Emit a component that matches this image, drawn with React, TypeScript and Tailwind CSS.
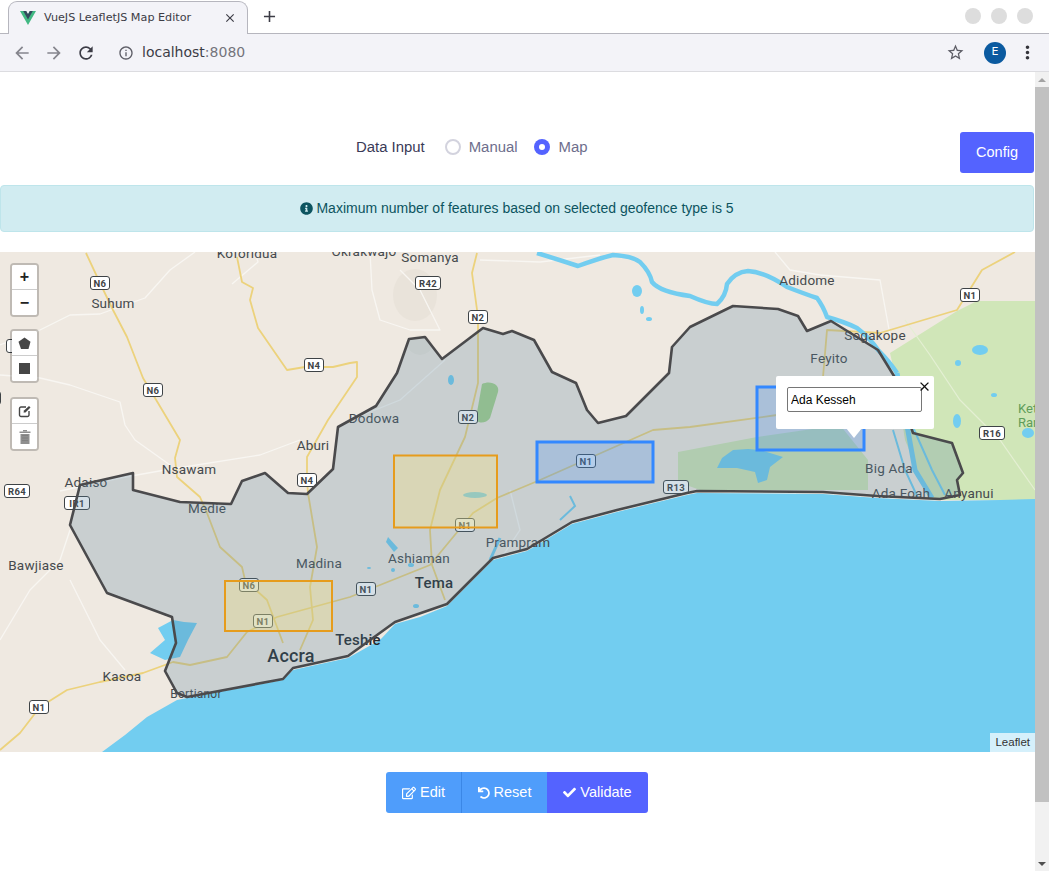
import React from 'react';
import { MdArrowBack, MdArrowForward, MdRefresh, MdInfoOutline, MdStarBorder, MdMoreVert, MdClose, MdAdd } from 'react-icons/md';
import { FaInfoCircle, FaRegEdit, FaUndo, FaCheck } from 'react-icons/fa';

// every map coordinate below is in page pixels, the svg viewBox starts at y=252
const boundary =
  '133,473 80,485 70,525 107,593 172,617 176,643 165,671 177,693 187,697 283,679 293,668 348,656 395,622 447,604 493,558 527,549 572,522 617,510 687,493 697,491 823,492 877,496 940,499 960,495 957,480 963,473 952,443 913,433 894,376 878,350 831,321 807,331 798,316 778,309 733,306 690,327 672,347 669,373 626,416 598,423 587,410 576,383 552,372 534,340 512,331 503,334 483,328 442,359 425,337 409,339 397,373 376,406 338,427 333,469 307,494 288,493 265,473 242,481 231,504 180,502 133,490';

const sea =
  '102,752 125,735 147,717 177,700 187,698 283,680 293,670 348,658 380,640 395,624 420,617 447,606 493,560 527,551 572,524 617,512 687,495 697,493 823,494 877,498 940,501 1000,500 1035,499 1035,752';

const yellowRoads = [
  '86,253 100,283 113,310 127,337 143,378 155,398 180,440 175,458 177,477 200,497 207,513 220,547 242,567 245,580 267,600 283,643',
  '237,257 242,282 253,288 250,300 258,328 287,370 305,367 333,367 350,363 357,362 357,377 328,420 307,457 307,480 308,493 317,547 310,587 313,620 300,650',
  '477,253 472,273 478,317 478,383 465,437 440,490 430,530 432,565 445,600',
  '1015,252 982,270 957,310 880,333 827,330 823,377',
  '777,415 690,427 653,430 540,480 497,498 473,513 430,565 350,597 277,617 247,632 227,657 190,665 173,662 143,673 100,682 67,690 40,707 20,733 0,750',
];

const whiteRoads = [
  '0,345 40,330 70,315 100,314 125,305 145,298 170,270 195,252',
  '0,375 40,378 70,385 120,402 125,425 135,440 170,465',
  '60,491 120,478 165,470 260,455 300,440',
  '232,284 258,262 255,252',
  '370,252 372,290 380,320 410,330 440,330 420,290 400,270',
  '480,260 540,262 600,255',
  '820,275 880,280 890,335',
  '0,640 30,590 60,560 70,530',
  '70,580 100,640 125,670',
  '775,252 790,270 820,275',
  '350,420 400,400 445,360',
  '500,560 520,530 510,490',
];

const cities: [string, number, number, number?, boolean?][] = [
  ['Koforidua', 247, 258],
  ['Okrakwajo', 364, 256],
  ['Somanya', 430, 262],
  ['Suhum', 113, 308],
  ['Adidome', 807, 285],
  ['Sogakope', 875, 340],
  ['Feyito', 829, 363],
  ['Dodowa', 374, 423],
  ['Aburi', 313, 450],
  ['Nsawam', 189, 474],
  ['Adaiso', 86, 487],
  ['Medie', 207, 513],
  ['Bawjiase', 36, 570],
  ['Madina', 319, 568],
  ['Ashiaman', 419, 563],
  ['Tema', 434, 588, 15, true],
  ['Teshie', 358, 645, 15, true],
  ['Accra', 291, 662, 18, true],
  ['Kasoa', 122, 681],
  ['Bortianor', 196, 698, 12],
  ['Prampram', 518, 547],
  ['Big Ada', 889, 473],
  ['Ada Foah', 901, 498],
  ['Anyanui', 969, 498],
];

const shields: [string, number, number][] = [
  ['N6', 100, 283], ['R42', 428, 283], ['N2', 478, 317], ['N1', 970, 295],
  ['N4', 314, 365], ['N6', 153, 390], ['N2', 468, 417], ['N4', 307, 480],
  ['R64', 17, 491], ['IR1', 77, 503], ['N1', 586, 461], ['N1', 465, 525],
  ['R13', 676, 487], ['R16', 992, 433], ['N6', 249, 585], ['N1', 263, 621],
  ['N1', 366, 589], ['N1', 39, 707], ['', 16, 346], ['', -9, 398],
];

const ponds = [
  [980, 350, 8, 5], [958, 363, 3, 3], [994, 395, 3, 2], [957, 421, 4, 7],
  [1028, 433, 6, 5], [451, 380, 3, 5], [637, 291, 5, 6], [649, 319, 3, 2],
  [642, 310, 2, 4], [369, 568, 2, 1], [393, 570, 2, 2], [416, 606, 3, 2],
  [411, 565, 3, 2], [475, 495, 12, 3],
];

function MapTiles() {
  return (
    <svg viewBox="0 252 1035 500" className="block w-full h-full font-['Roboto',sans-serif]">
      <rect x="0" y="252" width="1035" height="500" fill="#efe9e1" />
      <polygon points="977,301 1035,301 1035,500 930,500 905,440 895,375 890,353 957,311" fill="#d0e6b8" />
      <polygon points="678,452 757,437 840,425 868,460 868,490 700,490 678,482" fill="#cfe5b6" />
      <path d="M482 384 C490 380 500 384 498 392 L490 418 C486 424 476 424 476 418 Z" fill="#a4d18c" />
      <polyline points="905,320 930,355 960,400 1000,440 1035,490" fill="none" stroke="#e4efd3" strokeWidth="1.2" />
      <g fill="#e9e3da">
        <ellipse cx="415" cy="295" rx="22" ry="26" />
        <ellipse cx="420" cy="345" rx="12" ry="10" />
      </g>
      {whiteRoads.map((r, i) => (
        <polyline key={i} points={r} fill="none" stroke="#f8f6f2" strokeWidth="1.3" strokeLinejoin="round" />
      ))}
      {yellowRoads.map((r, i) => (
        <polyline key={i} points={r} fill="none" stroke="#ecd27c" strokeWidth="1.8" strokeLinejoin="round" />
      ))}
      <path
        d="M537 253 Q560 260 578 266 Q600 258 613 255 Q632 256 640 262 Q650 272 652 282 Q660 292 690 296 Q708 304 717 304 Q726 296 727 284 Q735 272 748 271 Q765 272 787 287 Q805 294 817 298 Q823 306 827 317 Q845 322 857 328 Q870 338 878 350 Q890 362 897 373"
        fill="none"
        stroke="#72cdf0"
        strokeWidth="4.500"
        strokeLinejoin="round"
      />
      <polyline points="897,373 906,420 915,470 932,498" fill="none" stroke="#72cdf0" strokeWidth="5" />
      <polyline points="893,430 905,470 918,498" fill="none" stroke="#72cdf0" strokeWidth="2" />
      <polyline points="912,425 932,470 945,495" fill="none" stroke="#72cdf0" strokeWidth="2" />
      <polygon points="717,468 722,458 733,450 748,449 760,450 783,457 770,467 767,480 758,483 755,472 737,468" fill="#72cdf0" />
      <polygon points="173,620 184,622 197,623 188,640 180,657 165,660 150,653 165,640 158,628" fill="#72cdf0" />
      <polygon points="388,537 398,548 394,552 386,542" fill="#72cdf0" />
      <polyline points="560,520 575,506 570,496" fill="none" stroke="#72cdf0" strokeWidth="2" />
      <polyline points="490,560 500,538" fill="none" stroke="#72cdf0" strokeWidth="3" />
      {ponds.map(([x, y, rx, ry], i) => (
        <ellipse key={i} cx={x} cy={y} rx={rx} ry={ry} fill="#72cdf0" />
      ))}
      <polygon points={sea} fill="#72cdf0" />
      {cities.map(([name, x, y, size, strong]) => (
        <text
          key={name}
          x={x}
          y={y}
          textAnchor="middle"
          fontSize={size ?? 13.5}
          fontWeight={strong ? 500 : 400}
          fill={strong ? '#25292c' : '#45494d'}
          letterSpacing=".2"
        >
          {name}
        </text>
      ))}
      <text x="1018" y="413" fontSize="13" fill="#5f9d5a">Ket</text>
      <text x="1018" y="427" fontSize="13" fill="#5f9d5a">Rar</text>
      {shields.map(([label, x, y], i) => {
        const w = label.length === 3 ? 25 : 19;
        return (
          <g key={i}>
            <rect x={x - w / 2} y={y - 6.5} width={w} height={13} rx="2.5" fill="#fff" stroke="#3e4346" strokeWidth="1" />
            <text x={x} y={y + 3.5} textAnchor="middle" fontSize="9.5" fontWeight="700" letterSpacing=".4" fill="#3e4346">
              {label}
            </text>
          </g>
        );
      })}
      {/* drawn features */}
      <polygon points={boundary} fill="#58849f" fillOpacity=".25" stroke="#4a4a4c" strokeWidth="2.6" strokeLinejoin="round" />
      <rect x="394" y="455.500" width="103" height="72" fill="#ffe97b" fillOpacity=".3" stroke="#e69c1c" strokeWidth="2" />
      <rect x="225" y="581" width="107" height="50" fill="#ffe97b" fillOpacity=".3" stroke="#e69c1c" strokeWidth="2" />
      <rect x="537" y="442" width="116" height="40" fill="#3388ff" fillOpacity=".2" stroke="#3388ff" strokeWidth="3" />
      <rect x="757" y="387" width="107" height="63" fill="#3388ff" fillOpacity=".2" stroke="#3388ff" strokeWidth="3" />
    </svg>
  );
}

function ControlGroup({ children }: { children: React.ReactNode }) {
  return (
    <div className="w-[29px] h-[54px] rounded-[4px] border-2 border-[#00000033] bg-clip-padding flex flex-col bg-white overflow-hidden">
      {children}
    </div>
  );
}

function ControlCell({ children, last }: { children: React.ReactNode; last?: boolean }) {
  return (
    <div className={`h-[25px] flex items-center justify-center bg-white ${last ? '' : 'border-b border-[#ccc]'}`}>
      {children}
    </div>
  );
}

function MapControls() {
  return (
    <div className="absolute left-[10px] top-[11px] flex flex-col">
      <ControlGroup>
        <ControlCell>
          <span className="text-[16px] leading-none font-bold text-[#222]">+</span>
        </ControlCell>
        <ControlCell last>
          <span className="text-[16px] leading-none font-bold text-[#222]">−</span>
        </ControlCell>
      </ControlGroup>
      <div className="mt-3">
        <ControlGroup>
          <ControlCell>
            <svg width="13" height="13" viewBox="0 0 13 13">
              <polygon points="6.500,0.500 12.500,4.800 10.500,12 3,12 0.500,4.800" fill="#464646" />
            </svg>
          </ControlCell>
          <ControlCell last>
            <div className="w-[11px] h-[11px] bg-[#464646]" />
          </ControlCell>
        </ControlGroup>
      </div>
      <div className="mt-[14px]">
        <ControlGroup>
          <ControlCell>
            <svg width="14" height="14" viewBox="0 0 14 14" fill="none" stroke="#464646" strokeWidth="1.4">
              <path d="M8 3H3a1.500 1.500 0 0 0-1.500 1.500v6.500A1.500 1.500 0 0 0 3 12.500h6.500A1.500 1.500 0 0 0 11 11V7" />
              <path d="M5.500 8.500l.5-2 5-4.500 1.500 1.500-5 5z" fill="#464646" stroke="none" />
            </svg>
          </ControlCell>
          <ControlCell last>
            <svg width="12" height="14" viewBox="0 0 12 14" fill="#8f8f8f">
              <rect x="0.500" y="1.500" width="11" height="1.500" />
              <rect x="4" y="0" width="4" height="1.500" />
              <rect x="1.500" y="4" width="9" height="10" />
              <path d="M3 5.500h6M3 8h6M3 10.500h6" stroke="#777" strokeWidth=".6" />
            </svg>
          </ControlCell>
        </ControlGroup>
      </div>
    </div>
  );
}

function Popup() {
  return (
    <div className="absolute left-[776px] top-[124px] w-[158px] h-[53px] bg-white rounded-[2px] font-['Liberation_Sans',sans-serif]">
      <input
        readOnly
        value="Ada Kesseh"
        className="absolute left-[11px] top-[11px] w-[135px] h-[25px] border border-[#767676] rounded-[2px] px-[3px] text-[12px] text-black outline-none"
      />
      <MdClose className="absolute left-[141px] top-[3px] text-[15px] text-[#111]" />
      <div className="absolute left-[70px] top-[53px] w-0 h-0 border-x-[8px] border-x-transparent border-t-[10px] border-t-white -mt-px" />
    </div>
  );
}

function BrowserChrome() {
  return (
    <div className="h-[72px] shrink-0 font-['DejaVu_Sans',sans-serif]">
      <div className="h-[34px] bg-white flex items-end border-b border-[#b6b6be] relative">
        <div className="ml-[8px] w-[240px] h-[33px] -mb-px bg-[#f3f3f8] border border-b-0 border-[#b6b6be] rounded-t-[9px] flex items-center pl-[11px] pr-[10px]">
          <svg width="16" height="14" viewBox="0 0 261.760 226.690" className="shrink-0">
            <path d="M161.096.001l-30.225 52.351L100.647.001H-.005l130.877 226.688L261.749.001z" fill="#41b883" />
            <path d="M161.096.001l-30.225 52.351L100.647.001H52.346l78.526 136.01L209.398.001z" fill="#34495e" />
          </svg>
          <span className="ml-[8px] flex-1 text-[11.2px] text-[#3c3c46] whitespace-nowrap">VueJS LeafletJS Map Editor</span>
          <MdClose className="text-[14px] text-[#3c3c46]" />
        </div>
        <MdAdd className="ml-[12px] mb-[7px] text-[19px] text-[#3c3c46]" />
        <div className="ml-auto mr-[16px] mb-[9px] flex gap-[10px]">
          <div className="w-4 h-4 rounded-full bg-[#dddddd]" />
          <div className="w-4 h-4 rounded-full bg-[#dddddd]" />
          <div className="w-4 h-4 rounded-full bg-[#dddddd]" />
        </div>
      </div>
      <div className="h-[38px] bg-[#f3f3f8] border-b border-[#dcdce0] flex items-center pl-[12px] pr-[11px]">
        <MdArrowBack className="text-[20px] text-[#85858d]" />
        <MdArrowForward className="ml-[12px] text-[20px] text-[#85858d]" />
        <MdRefresh className="ml-[12px] text-[20px] text-[#3c3c46]" />
        <MdInfoOutline className="ml-[22px] text-[16px] text-[#5d5d66]" />
        <span className="ml-[8px] text-[14px] text-[#3c3c46]">
          localhost<span className="text-[#74747c]">:8080</span>
        </span>
        <MdStarBorder className="ml-auto text-[19px] text-[#5d5d66]" />
        <div className="ml-[19px] w-[22px] h-[22px] rounded-full bg-[#0b5aa0] text-white text-[11px] flex items-center justify-center">E</div>
        <MdMoreVert className="ml-[11px] text-[21px] text-[#33333a]" />
      </div>
    </div>
  );
}

function Scrollbar() {
  return (
    <div className="w-[14px] shrink-0 bg-[#f1f1f1] flex flex-col items-center">
      <div className="h-[15px] flex items-center justify-center">
        <div className="w-0 h-0 border-x-[4px] border-x-transparent border-b-[4px] border-b-[#a3a3a3]" />
      </div>
      <div className="w-full h-[715px] bg-[#c1c1c1]" />
      <div className="mt-auto h-[15px] flex items-center justify-center">
        <div className="w-0 h-0 border-x-[4px] border-x-transparent border-t-[4px] border-t-[#505050]" />
      </div>
    </div>
  );
}

export default function App() {
  return (
    <div className="w-[1049px] h-[871px] flex flex-col overflow-hidden bg-white">
      <BrowserChrome />
      <div className="flex-1 flex min-h-0">
        <div className="flex-1 min-w-0 font-['Liberation_Sans',sans-serif]">
          <div className="pt-[60px] flex items-start pl-[356px] pr-px">
            <div className="h-[30px] flex items-center text-[14.900px] text-[#6e6e8c]">
              <span className="text-[#3a3a57]">Data Input</span>
              <div className="ml-[20px] w-4 h-4 rounded-full border-2 border-[#d3d3de] bg-white" />
              <span className="ml-[8px]">Manual</span>
              <div className="ml-[16px] w-4 h-4 rounded-full bg-[#5463ff] flex items-center justify-center">
                <div className="w-[6px] h-[6px] rounded-full bg-white" />
              </div>
              <span className="ml-[9px]">Map</span>
            </div>
            <button className="ml-auto w-[74px] h-[41px] rounded-[3px] bg-[#5463ff] text-white text-[14.500px]">Config</button>
          </div>
          <div className="mt-3 mr-px h-[47px] flex items-center justify-center gap-[3px] rounded-[4px] border border-[#bee5eb] bg-[#d1ecf1] text-[14px] text-[#0c5460]">
            <FaInfoCircle className="text-[13px]" />
            <span>Maximum number of features based on selected geofence type is 5</span>
          </div>
          <div className="relative mt-5 h-[500px] overflow-hidden">
            <MapTiles />
            <MapControls />
            <Popup />
            <div className="absolute right-0 bottom-0 h-[19px] px-[5px] bg-[#ffffffb3] text-[11.500px] leading-[19px] text-[#333]">Leaflet</div>
          </div>
          <div className="mt-5 pr-px flex justify-center">
            <div className="flex h-[41px] text-[14.500px] text-white">
              <button className="w-[76px] flex items-center justify-center gap-[4px] rounded-l-[3px] bg-[#4f9dfb] border-r border-[#3b87e6]">
                <FaRegEdit className="text-[14px]" /> Edit
              </button>
              <button className="w-[85px] flex items-center justify-center gap-[4px] bg-[#4f9dfb]">
                <FaUndo className="text-[12px]" /> Reset
              </button>
              <button className="w-[101px] flex items-center justify-center gap-[4px] rounded-r-[3px] bg-[#5463ff]">
                <FaCheck className="text-[13px]" /> Validate
              </button>
            </div>
          </div>
        </div>
        <Scrollbar />
      </div>
    </div>
  );
}
